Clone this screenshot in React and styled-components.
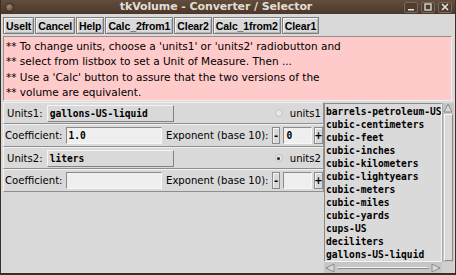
import React from 'react'
import styled, { createGlobalStyle } from 'styled-components'

const GlobalStyle = createGlobalStyle`
    html, body {
        margin: 0;
        padding: 0;
        background: #d9d9d9;
    }
    * { box-sizing: border-box; }
`

const Window = styled.div`
    width: 456px;
    height: 275px;
    display: flex;
    flex-direction: column;
    background: #d9d9d9;
    border-left: 1px solid #3d2e24;
    border-right: 1px solid #3d2e24;
    border-bottom: 2px solid #3d2e24;
    overflow: hidden;
    font-family: "DejaVu Sans", Verdana, sans-serif;
    color: #000;
`

const TitleBar = styled.div`
    height: 14px;
    flex: none;
    display: flex;
    align-items: center;
    background: linear-gradient(#634d3c, #4a382b);
    padding: 0 3px 0 4px;
`

const TitleDot = styled.div`
    width: 9px;
    height: 9px;
    border-radius: 50%;
    background: radial-gradient(circle at 40% 35%, #9a8a7e, #574539);
    border: 1px solid #3a2c22;
`

const Title = styled.div`
    flex: 1;
    text-align: center;
    font-size: 11px;
    line-height: 14px;
    font-weight: bold;
    color: #e4ddd3;
    padding-left: 14px;
    letter-spacing: -0.1px;
    white-space: nowrap;
`

const WinButtons = styled.div`
    display: flex;
    gap: 3px;
`

const WinButton = styled.div`
    width: 14px;
    height: 11px;
    border: 1px solid #7a6a5e;
    border-radius: 2px;
    background: #4f3d30;
    display: flex;
    align-items: center;
    justify-content: center;
`

const Toolbar = styled.div`
    flex: none;
    display: flex;
    gap: 1px;
    padding: 3px 0 2px 2px;
    height: 21px;
`

const ToolButton = styled.div`
    height: 17px;
    padding: 0 2px;
    display: flex;
    align-items: center;
    font-family: "Liberation Sans", Arial, sans-serif;
    font-size: 10.5px;
    font-weight: bold;
    border: 1px solid #7d7d7d;
    box-shadow: inset 1px 1px #f4f4f4, inset -1px -1px #b5b5b5;
    background: #d9d9d9;
    letter-spacing: -0.1px;
`

const Message = styled.div`
    flex: none;
    margin: 1px 3px 1px 2px;
    height: 65px;
    background: #ffcaca;
    border: 1px solid #9c8c8c;
    border-right-color: #eee;
    border-bottom-color: #eee;
    padding: 2px 0 0 2px;
    font-size: 10.5px;
    line-height: 15.4px;
    white-space: pre;
`

const Main = styled.div`
    flex: 1;
    display: flex;
    min-height: 0;
`

const LeftCol = styled.div`
    width: 323px;
    padding-left: 2px;
    display: flex;
    flex-direction: column;
`

const Row = styled.div`
    height: ${p => p.h || 22}px;
    display: flex;
    align-items: center;
    border: 1px solid;
    border-color: #f2f2f2 #8e8e8e #8e8e8e #f2f2f2;
    padding-left: ${p => p.pl || 1}px;
    font-size: 10.1px;
`

const Label = styled.span`
    margin-right: ${p => p.mr || 3}px;
    white-space: nowrap;
`

const UnitBox = styled.div`
    width: 127px;
    height: 17px;
    display: flex;
    align-items: center;
    padding-left: 2px;
    font-family: "DejaVu Sans Mono", monospace;
    font-weight: bold;
    font-size: 9.6px;
    background: #d9d9d9;
    border: 1px solid;
    border-color: #f4f4f4 #828282 #828282 #f4f4f4;
`

const Entry = styled.div`
    width: ${p => p.w}px;
    height: 17px;
    display: flex;
    align-items: center;
    padding-left: 2px;
    font-family: "DejaVu Sans Mono", monospace;
    font-weight: bold;
    font-size: 9.6px;
    background: #efefef;
    border: 1px solid;
    border-color: #8a8a8a #f8f8f8 #f8f8f8 #8a8a8a;
    margin-right: ${p => p.mr || 0}px;
`

const Spacer = styled.div`
    flex: 1;
`

const Radio = styled.div`
    width: 8px;
    height: 8px;
    border-radius: 50%;
    background: #e6e6e6;
    border: 1px solid #c2c2c2;
    margin-right: 7px;
    display: flex;
    align-items: center;
    justify-content: center;
    &::after {
        content: '';
        width: 3px;
        height: 3px;
        border-radius: 50%;
        background: ${p => (p.on ? '#222' : 'transparent')};
    }
`

const SpinButton = styled.div`
    width: 9px;
    height: 17px;
    display: flex;
    align-items: center;
    justify-content: center;
    font-size: 10px;
    font-weight: bold;
    border: 1px solid #8a8a8a;
    box-shadow: inset 1px 1px #f6f6f6;
    margin-right: ${p => p.mr || 0}px;
`

const ListArea = styled.div`
    flex: 1;
    display: grid;
    grid-template-columns: 118px 12px;
    grid-template-rows: 159px 11px;
    padding-top: 1px;
`

const ListBox = styled.div`
    border: 1px solid;
    border-color: #8a8a8a #f4f4f4 #f4f4f4 #8a8a8a;
    padding: 1px 0 0 1px;
    overflow: hidden;
    font-family: "DejaVu Sans Mono", monospace;
    font-weight: bold;
    font-size: 9.6px;
    line-height: 13px;
    background: #dadada;
`

const ListItem = styled.div`
    white-space: nowrap;
`

const VScroll = styled.div`
    background: #c6c6c6;
    border-left: 1px solid #a8a8a8;
    display: flex;
    flex-direction: column;
`

const ScrollThumb = styled.div`
    flex: 1;
    margin: 1px;
    background: #d9d9d9;
    border: 1px solid;
    border-color: #f4f4f4 #8a8a8a #8a8a8a #f4f4f4;
`

const HScroll = styled.div`
    background: #c6c6c6;
    display: flex;
    align-items: center;
    padding: 1px;
    gap: 1px;
`

const Corner = styled.div`
    background: #cfcfcf;
`

const Arrow = ({ dir }) => {
    const pts = {
        up: '1,9 5,1 9,9',
        left: '9,1 1,5 9,9',
        right: '1,1 9,5 1,9',
    }[dir]
    return (
        <svg width="10" height="10" viewBox="0 0 10 10" style={{ flex: 'none' }}>
            <polygon points={pts} fill="#d9d9d9" stroke="#8a8a8a" strokeWidth="1" />
        </svg>
    )
}

const units = [
    'barrels-petroleum-US',
    'cubic-centimeters',
    'cubic-feet',
    'cubic-inches',
    'cubic-kilometers',
    'cubic-lightyears',
    'cubic-meters',
    'cubic-miles',
    'cubic-yards',
    'cups-US',
    'deciliters',
    'gallons-US-liquid',
]

const message = `** To change units, choose a 'units1' or 'units2' radiobutton and
** select from listbox to set a Unit of Measure. Then ...
** Use a 'Calc' button to assure that the two versions of the
** volume are equivalent.`

const UnitsRow = ({ label, value, radio, on }) => (
    <Row h={22} pl={3}>
        <Label mr={4}>{label}</Label>
        <UnitBox>{value}</UnitBox>
        <Spacer />
        <Radio on={on} />
        <Label mr={2}>{radio}</Label>
    </Row>
)

const CoefRow = ({ coef, exp }) => (
    <Row h={23}>
        <Label mr={3}>Coefficient:</Label>
        <Entry w={98} mr={4}>{coef}</Entry>
        <Label mr={3}>Exponent (base 10):</Label>
        <SpinButton mr={3}>-</SpinButton>
        <Entry w={29} mr={2}>{exp}</Entry>
        <SpinButton>+</SpinButton>
    </Row>
)

const App = () => {
    return (
        <>
            <GlobalStyle />
            <Window>
                <TitleBar>
                    <TitleDot />
                    <Title>tkVolume - Converter / Selector</Title>
                    <WinButtons>
                        <WinButton>
                            <svg width="8" height="8"><rect x="1" y="6" width="6" height="1.5" fill="#e8e2da" /></svg>
                        </WinButton>
                        <WinButton>
                            <svg width="8" height="8"><rect x="1" y="1" width="6" height="6" fill="none" stroke="#e8e2da" strokeWidth="1.3" /></svg>
                        </WinButton>
                        <WinButton>
                            <svg width="8" height="8"><path d="M1 1 L7 7 M7 1 L1 7" stroke="#e8e2da" strokeWidth="1.6" /></svg>
                        </WinButton>
                    </WinButtons>
                </TitleBar>
                <Toolbar>
                    <ToolButton>UseIt</ToolButton>
                    <ToolButton>Cancel</ToolButton>
                    <ToolButton>Help</ToolButton>
                    <ToolButton>Calc_2from1</ToolButton>
                    <ToolButton>Clear2</ToolButton>
                    <ToolButton>Calc_1from2</ToolButton>
                    <ToolButton>Clear1</ToolButton>
                </Toolbar>
                <Message>{message}</Message>
                <Main>
                    <LeftCol>
                        <UnitsRow label="Units1:" value="gallons-US-liquid" radio="units1" />
                        <CoefRow coef="1.0" exp="0" />
                        <UnitsRow label="Units2:" value="liters" radio="units2" on />
                        <CoefRow coef="" exp="" />
                    </LeftCol>
                    <ListArea>
                        <ListBox>
                            {units.map(u => <ListItem key={u}>{u}</ListItem>)}
                        </ListBox>
                        <VScroll>
                            <Arrow dir="up" />
                            <ScrollThumb />
                        </VScroll>
                        <HScroll>
                            <Arrow dir="left" />
                            <ScrollThumb />
                            <Arrow dir="right" />
                        </HScroll>
                        <Corner />
                    </ListArea>
                </Main>
            </Window>
        </>
    )
}

export default App
